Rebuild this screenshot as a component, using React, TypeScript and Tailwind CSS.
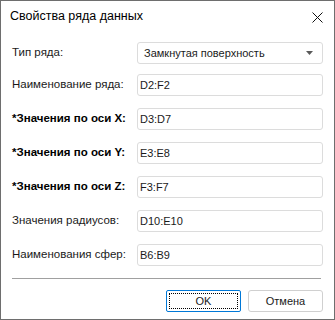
import React from "react";

const ui = { fontFamily: '"Liberation Sans", Arial, sans-serif' };

type Row = { label: string; value: string; required?: boolean };

const rows: Row[] = [
  { label: "Наименование ряда:", value: "D2:F2" },
  { label: "*Значения по оси X:", value: "D3:D7", required: true },
  { label: "*Значения по оси Y:", value: "E3:E8", required: true },
  { label: "*Значения по оси Z:", value: "F3:F7", required: true },
  { label: "Значения радиусов:", value: "D10:E10" },
  { label: "Наименования сфер:", value: "B6:B9" },
];

export default function App() {
  return (
    <div
      className="w-[335px] h-[320px] bg-white border border-[#6e6e6e] flex flex-col text-[#1a1a1a]"
      style={ui}
    >
      {/* Title bar */}
      <div className="h-[29px] flex items-center justify-between pl-[9px] pr-[11px] mt-[1px]">
        <span className="text-[12.5px] leading-none text-black">Свойства ряда данных</span>
        <svg width="11" height="11" viewBox="0 0 11 11" className="mt-[1px]">
          <path d="M0.5 0.5L10.5 10.5M10.5 0.5L0.5 10.5" stroke="#111" strokeWidth="1" />
        </svg>
      </div>

      <div className="flex flex-col pl-[11px] pr-[11px] mt-[11px] text-[11.5px]">
        {/* Series type */}
        <div className="flex items-center h-[22px]">
          <span className="w-[125px] shrink-0 whitespace-nowrap">Тип ряда:</span>
          <div className="w-[187px] h-[22px] border border-[#dcdcdc] rounded-[3px] flex items-center justify-between pl-[6px] pr-[9px]">
            <span className="text-[11px]">Замкнутая поверхность</span>
            <svg width="7" height="4" viewBox="0 0 7 4">
              <path d="M0 0H7L3.5 4Z" fill="#5a5a5a" />
            </svg>
          </div>
        </div>

        {rows.map((r, i) => (
          <div
            key={r.label}
            className={`flex items-center h-[22px] ${i === 0 ? "mt-[10px]" : "mt-[12px]"}`}
          >
            <span
              className={`w-[125px] shrink-0 whitespace-nowrap ${
                r.required ? "font-bold text-[11.5px] text-black" : ""
              }`}
            >
              {r.label}
            </span>
            <div className="w-[187px] h-[22px] border border-[#dcdcdc] rounded-[3px] pl-[2px] pt-[3px] text-[11px] leading-[14px]">
              {r.value}
            </div>
          </div>
        ))}

        <div className="h-px bg-[#a0a0a0] mt-[12px] mr-[2px]" />

        <div className="flex justify-end gap-[7px] mt-[11px] text-[11px]">
          <button className="w-[75px] h-[22px] border border-[#0078d7] rounded-[2px] bg-white p-[2px]">
            <div className="w-full h-full border border-dotted border-black flex items-center justify-center">
              OK
            </div>
          </button>
          <button className="w-[75px] h-[22px] border border-[#d0d0d0] rounded-[3px] bg-white flex items-center justify-center">
            Отмена
          </button>
        </div>
      </div>
    </div>
  );
}
